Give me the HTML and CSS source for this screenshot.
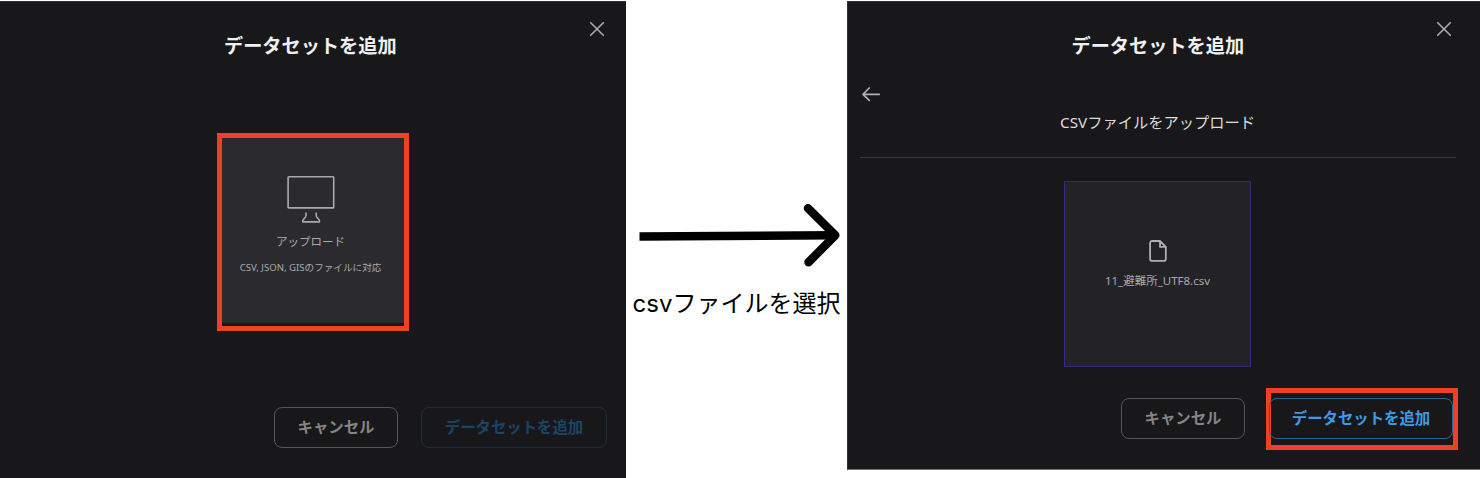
FILE: index.html
```html
<!DOCTYPE html>
<html lang="ja">
<head>
<meta charset="utf-8">
<title>データセットを追加</title>
<link rel="stylesheet" href="styles.css">
</head>
<body>
<main class="guide">
  <section class="modal modal-select">
    <header class="modal-header">
      <h2 class="modal-title">データセットを追加</h2>
      <svg class="close" viewBox="0 0 16 16"><path d="M1.7 1.7 14.3 14.3M14.3 1.7 1.7 14.3"/></svg>
    </header>
    <div class="modal-body">
      <div class="highlight highlight-card">
        <div class="card card-source">
          <svg class="icon-monitor" viewBox="0 0 48 50"><rect x="1.1" y="1.7" width="45.6" height="31.2" rx=".7"/><path d="M19 38v2.2c0 3.3-3.2 3.4-3.2 5.6v1.1h16.6v-1.1c0-2.2-3.2-2.3-3.2-5.6V38"/></svg>
          <p class="card-name">アップロード</p>
          <p class="card-note">CSV, JSON, GISのファイルに対応</p>
        </div>
      </div>
    </div>
    <footer class="modal-footer">
      <button class="btn btn-cancel">キャンセル</button>
      <button class="btn btn-add btn-disabled">データセットを追加</button>
    </footer>
  </section>

  <div class="step">
    <svg class="step-arrow" viewBox="0 0 221 80"><path class="shaft" d="M13.5 46.5 208 45.2"/><path class="head" d="M182 18.3 209.3 45.2 182.5 72.3"/></svg>
    <p class="step-label">csvファイルを選択</p>
  </div>

  <section class="modal modal-file">
    <header class="modal-header">
      <h2 class="modal-title">データセットを追加</h2>
      <svg class="close" viewBox="0 0 16 16"><path d="M1.7 1.7 14.3 14.3M14.3 1.7 1.7 14.3"/></svg>
    </header>
    <div class="upload-header">
      <svg class="back" viewBox="0 0 20 16"><path d="M18.3 8.3H2M8.2 2 2 8.3l6.2 6"/></svg>
      <h3 class="upload-title">CSVファイルをアップロード</h3>
    </div>
    <div class="modal-body">
      <div class="card card-file">
        <svg class="icon-file" viewBox="0 0 20 24"><path d="M12 2H4A1.9 1.9 0 0 0 2.1 3.9v16A1.9 1.9 0 0 0 4 21.8h11.9a1.9 1.9 0 0 0 1.9-1.9V7.8L12 2v5.8h5.8"/></svg>
        <p class="card-name">11_避難所_UTF8.csv</p>
      </div>
    </div>
    <footer class="modal-footer">
      <button class="btn btn-cancel">キャンセル</button>
      <div class="highlight highlight-button">
        <button class="btn btn-add">データセットを追加</button>
      </div>
    </footer>
  </section>
</main>
</body>
</html>
```
FILE: styles.css
```css
* { box-sizing: border-box; }
body { margin: 0; background: #fff; }
h2, h3, p { margin: 0; font-weight: 400; white-space: nowrap; }
svg { display: block; fill: none; flex: none; }
path, rect { stroke-linecap: round; stroke-linejoin: round; }

.guide {
  display: grid;
  grid-template-columns: 626px 221px 633px;
  align-items: start;
  width: 1480px;
  height: 478px;
  padding-top: 1px;
  overflow: hidden;
  font-family: "Noto Sans", "Noto Sans CJK JP", sans-serif;
}

.modal {
  display: flex;
  flex-direction: column;
  background: #18181a;
  border-top: 1px solid #303234;
  color: #aaa;
}
.modal-select { height: 477px; }
.modal-file { height: 469px; border-left: 1px solid #303234; border-bottom: 1px solid #77777a; }

.modal-header {
  display: grid;
  grid-template-columns: 1fr 172px 1fr;
  width: 620px;
  height: 76px;
  padding-right: 15px;
  padding-left: 15px;
}
.modal-file .modal-header { width: 619px; }
.modal-title {
  grid-column: 2;
  padding-top: 30px;
  font-size: 19.2px;
  line-height: 28px;
  font-weight: 700;
  color: #f0f0f0;
  text-align: center;
}
.close { width: 16px; height: 16px; margin-top: 19px; justify-self: end; stroke: #aaa; stroke-width: 1.6; }

.modal-body { display: flex; justify-content: center; width: 622px; }
.modal-select .modal-body { height: 329px; padding: 55px 0 0 3px; }
.modal-file .modal-body { width: 619px; height: 211px; padding: 23px 0 0; }

.highlight { border: 5px solid #ed4025; }
.highlight-card { width: 192px; height: 198px; overflow: hidden; }
.highlight-button { width: 192px; height: 62px; margin-top: -10px; padding-top: 5px; display: flex; justify-content: center; }

.card { display: flex; flex-direction: column; align-items: center; }
.card-source { width: 182px; height: 185px; padding: 37px 4px 0 0; background: #2b2a2f; }
.card-file { width: 187px; height: 186px; padding-top: 57px; background: #232226; border: 1px solid #2d2e83; }
.card-name { font-size: 11.5px; line-height: 18px; }
.card-source .card-name { margin-top: 8px; }
.card-file .card-name { margin-top: 9px; }
.card-note { margin-top: 9px; font-size: 9.6px; line-height: 16px; }

.icon-monitor { width: 48px; height: 50px; stroke: #aaa; stroke-width: 1.6; }
.icon-file { width: 20px; height: 24px; stroke: #b0b0b0; stroke-width: 1.8; }

.upload-header { width: 596px; height: 80px; margin-left: 12px; border-bottom: 1px solid #38383a; }
.back { width: 20px; height: 16px; margin: 8px 0 0 1px; stroke: #b0b0b0; stroke-width: 1.7; }
.upload-title { width: 595px; padding-top: 8px; font-size: 15.25px; line-height: 24px; color: #ddd; text-align: center; }

.modal-footer { display: flex; gap: 23px; padding-left: 274px; }
.modal-file .modal-footer { gap: 21px; padding-left: 273px; margin-top: 29px; }
.btn {
  height: 41px;
  padding: 0;
  border: 1px solid #555557;
  border-radius: 8px;
  background: none;
  font: 700 15.4px/24px "Noto Sans", "Noto Sans CJK JP", sans-serif;
  color: #858585;
  white-space: nowrap;
}
.btn-cancel { width: 124px; }
.btn-add { flex: none; width: 186px; border-color: #2b6594; color: #3f9ae5; }
.btn-disabled { border-color: #192f40; color: #1b4565; }
.highlight-button .btn-add { width: 184px; margin-left: -2px; }

.step { padding-top: 189px; }
.step-arrow { width: 221px; height: 80px; stroke: #000; stroke-width: 8.5; }
.step-arrow .shaft { stroke-linecap: butt; }
.step-label { margin-top: 17px; font: 24px/34px Inter, "Noto Sans CJK JP", sans-serif; color: #000; text-align: center; }
```
